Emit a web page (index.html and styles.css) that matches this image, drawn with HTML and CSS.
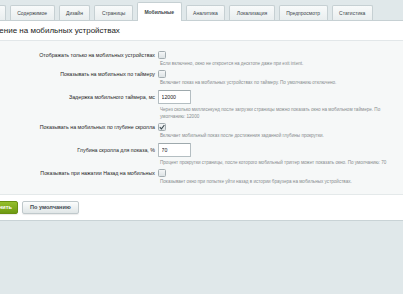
FILE: index.html
```html
<!DOCTYPE html>
<html lang="ru">
<head>
    <meta charset="UTF-8">
    <title>Мобильные</title>
    <link rel="stylesheet" href="styles.css">
</head>
<body>
<div class="page">
    <div class="tabs">
        <span class="tab">Поведение</span>
        <span class="tab">Содержимое</span>
        <span class="tab">Дизайн</span>
        <span class="tab">Страницы</span>
        <span class="tab tab-active">Мобильные</span>
        <span class="tab">Аналитика</span>
        <span class="tab">Локализация</span>
        <span class="tab">Предпросмотр</span>
        <span class="tab">Статистика</span>
    </div>

    <div class="panel">
        <h2 class="panel-title">Поведение на мобильных устройствах</h2>

        <div class="form">
            <div class="field">
                <label class="field-label">Отображать только на мобильных устройствах</label>
                <div class="field-control"><span class="check"></span></div>
                <div class="field-hint">Если включено, окно не откроется на десктопе даже при exit intent.</div>
            </div>

            <div class="field">
                <label class="field-label">Показывать на мобильных по таймеру</label>
                <div class="field-control"><span class="check"></span></div>
                <div class="field-hint">Включает показ на мобильных устройствах по таймеру. По умолчанию отключено.</div>
            </div>

            <div class="field field-input">
                <label class="field-label">Задержка мобильного таймера, мс</label>
                <div class="field-control"><input class="text-input" type="text" value="12000"></div>
                <div class="field-hint">Через сколько миллисекунд после загрузки страницы можно показать окно на мобильном таймере. По умолчанию: 12000</div>
            </div>

            <div class="field">
                <label class="field-label">Показывать на мобильных по глубине скролла</label>
                <div class="field-control">
                    <span class="check">
                        <svg viewBox="0 0 8 8" width="8" height="8"><path d="M1.8 4.2 L3.4 5.8 L6.4 2" fill="none" stroke="#3d4a50" stroke-width="1.1"/></svg>
                    </span>
                </div>
                <div class="field-hint">Включает мобильный показ после достижения заданной глубины прокрутки.</div>
            </div>

            <div class="field field-input">
                <label class="field-label">Глубина скролла для показа, %</label>
                <div class="field-control"><input class="text-input" type="text" value="70"></div>
                <div class="field-hint">Процент прокрутки страницы, после которого мобильный триггер может показать окно. По умолчанию: 70</div>
            </div>

            <div class="field">
                <label class="field-label">Показывать при нажатии Назад на мобильных</label>
                <div class="field-control"><span class="check"></span></div>
                <div class="field-hint">Показывает окно при попытке уйти назад в истории браузера на мобильных устройствах.</div>
            </div>
        </div>

        <div class="footer">
            <button class="btn btn-save">Сохранить</button>
            <button class="btn">По умолчанию</button>
        </div>
    </div>
</div>
</body>
</html>
```

FILE: styles.css
```css
/* page background */
body {
    margin: 0;
    background: #e0e8ea;
    font-family: "Liberation Sans", Arial, sans-serif;
    color: #222;
    overflow: hidden;
}

/* the admin page is scrolled a little to the right */
.page {
    margin-left: -29px;
}

/* tabs */
.tabs {
    display: flex;
    align-items: flex-end;
    gap: 4px;
    height: 20px;
    margin-left: -6px;
}

.tab {
    height: 14px;
    line-height: 14px;
    padding: 0 6.5px;
    font-size: 5px;
    color: #3b454a;
    background: linear-gradient(#f8fafa, #e9eeef);
    border: 1px solid #c6d0d3;
    border-bottom: none;
    border-radius: 2px 2px 0 0;
    white-space: nowrap;
}

.tab-active {
    height: 18px;
    line-height: 18px;
    margin-bottom: -1px;
    background: #fff;
    font-weight: bold;
    position: relative;
    z-index: 1;
}

/* panel */
.panel {
    background: #fff;
    border-top: 1px solid #c6d0d3;
    border-bottom: 1px solid #c9d3d6;
}

.panel-title {
    margin: 0;
    padding-left: 5px;
    height: 19px;
    line-height: 19px;
    font-size: 8px;
    font-weight: normal;
    color: #222;
    border-bottom: 1px solid #e2e7e9;
}

/* form */
.form {
    background: #f6f8f8;
    padding: 9px 0 8px;
    border-bottom: 1px solid #e4e9ea;
}

.field {
    display: grid;
    grid-template-columns: 186px 1fr;
    padding-bottom: 1.5px;
}

.field-label {
    grid-column: 1;
    grid-row: 1;
    align-self: center;
    text-align: right;
    padding-right: 2px;
    font-size: 5.3px;
    line-height: 10px;
    color: #1f1f1f;
    white-space: nowrap;
}

.field-control {
    grid-column: 2;
    grid-row: 1;
    display: flex;
    align-items: center;
    height: 10px;
    padding-left: 0.5px;
}

.field-hint {
    grid-column: 2;
    grid-row: 2;
    padding-left: 3px;
    max-width: 242px;
    font-size: 4.6px;
    line-height: 7px;
    color: #878c8e;
}

.field-input {
    padding-top: 2px;
}

.field-input .field-control {
    height: 16px;
}

.field-input .field-hint {
    margin-top: 1px;
}

/* checkbox */
.check {
    display: block;
    width: 8px;
    height: 8px;
    box-sizing: border-box;
    border: 1px solid #a3adb1;
    border-radius: 1.5px;
    background: linear-gradient(#f4f6f7, #dde3e5);
    position: relative;
}

.check svg {
    position: absolute;
    left: -1px;
    top: -1px;
}

/* text input */
.text-input {
    width: 33px;
    height: 14px;
    box-sizing: border-box;
    margin: 0;
    padding: 0 3px;
    font-family: inherit;
    font-size: 5.2px;
    color: #222;
    background: #fff;
    border: 1px solid #b4bec2;
    border-top-color: #9ea9ad;
    border-radius: 1px;
    outline: none;
}

/* footer buttons */
.footer {
    display: flex;
    gap: 4px;
    padding: 6px 0 6px 3px;
}

.btn {
    height: 12.5px;
    padding: 0 7px;
    margin: 0;
    font-family: inherit;
    font-size: 5.6px;
    font-weight: bold;
    color: #3f4a50;
    background: linear-gradient(#fcfdfd, #e0e6e7);
    border: 1px solid #c0c9cc;
    border-radius: 2px;
    box-shadow: 0 1px 1px rgba(0, 0, 0, 0.08);
}

.btn-save {
    padding-right: 5px;
    color: #fff;
    background: linear-gradient(#95bf2c, #6e9a12);
    border-color: #6a9012;
}
```
